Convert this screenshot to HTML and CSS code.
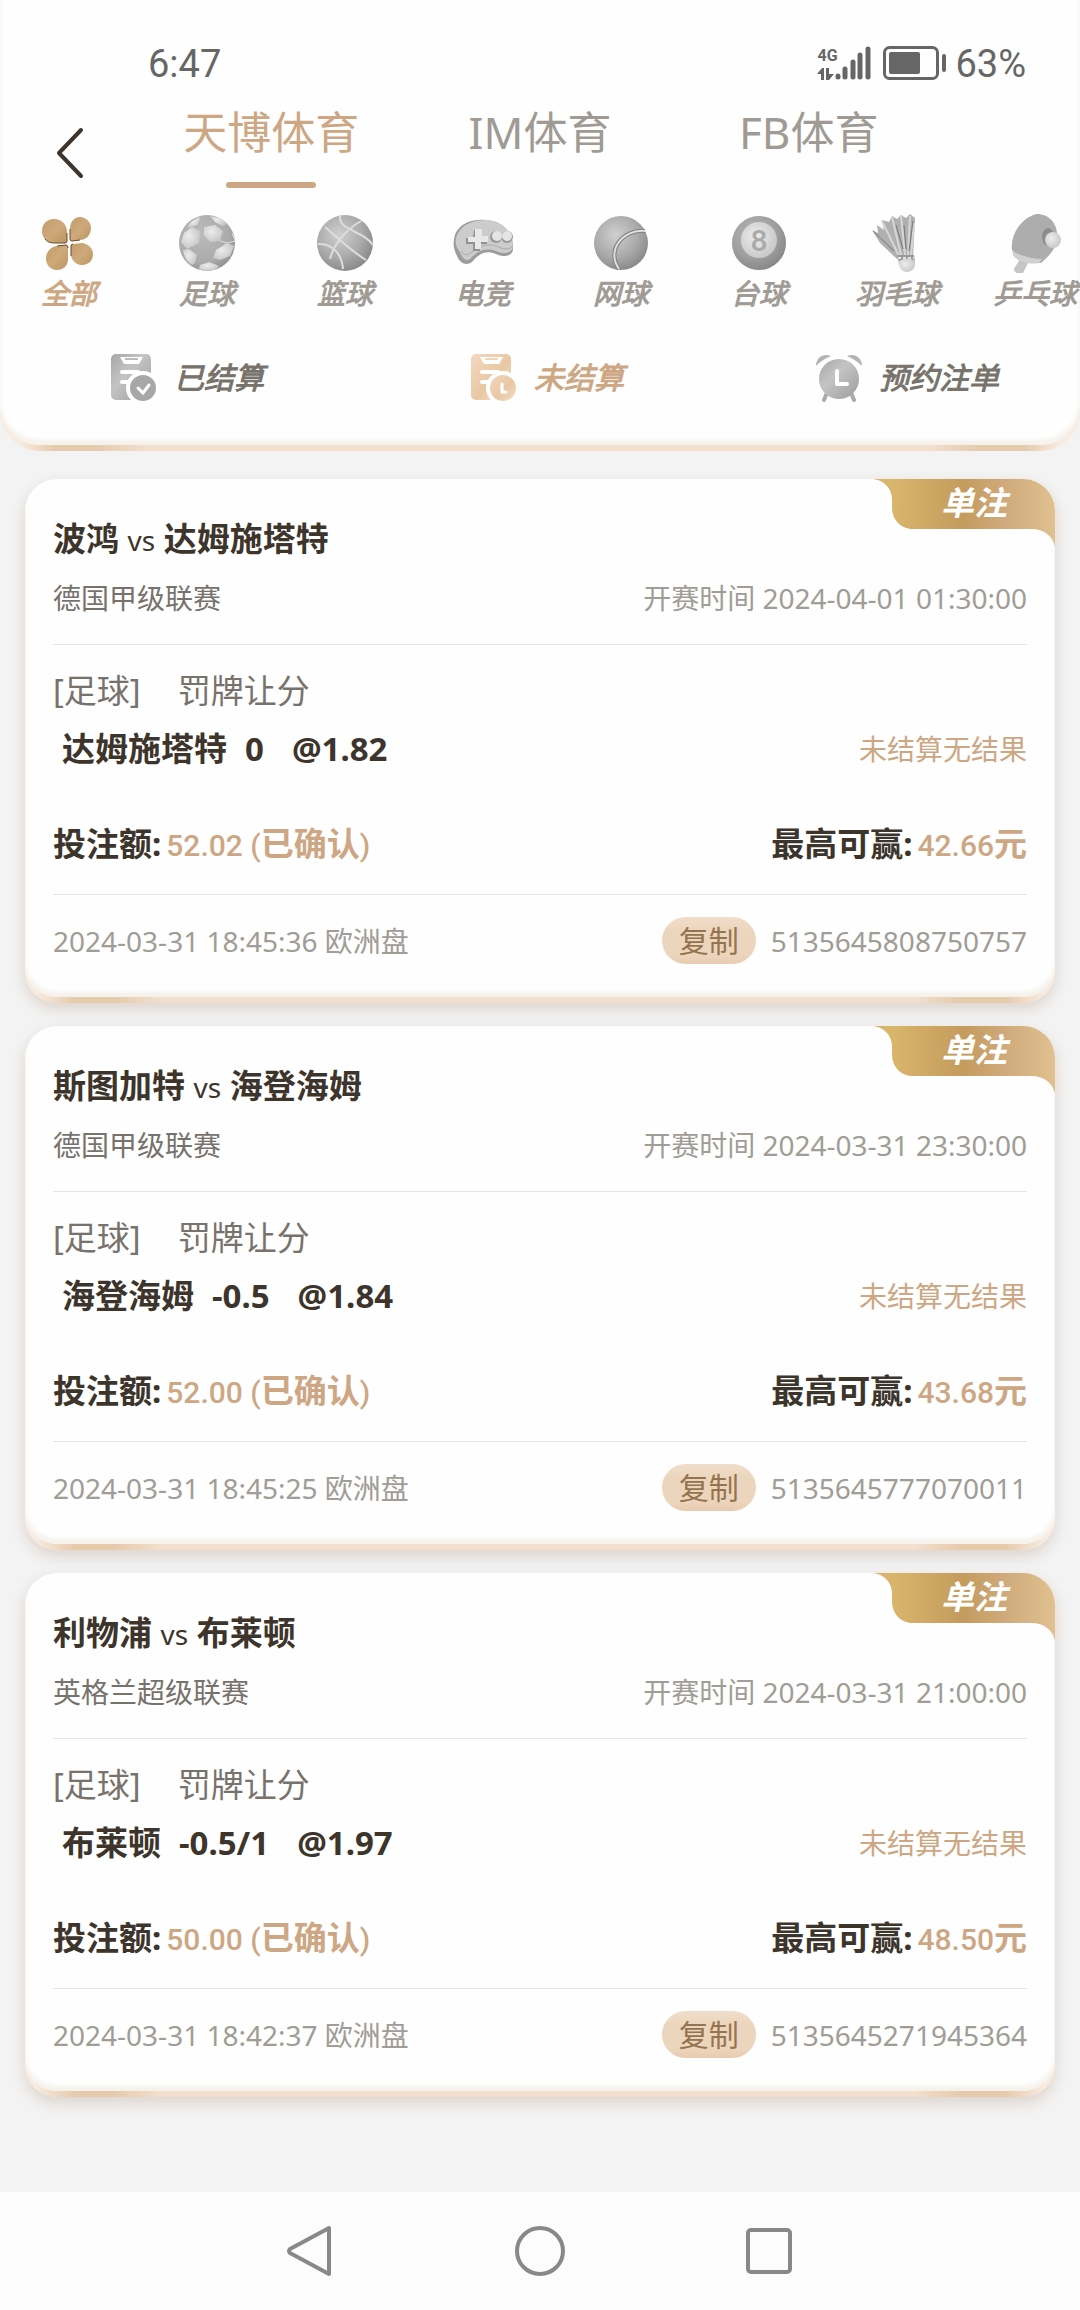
FILE: index.html
```html
<!DOCTYPE html>
<html lang="zh-CN">
<head>
<meta charset="utf-8">
<meta name="viewport" content="width=device-width, initial-scale=1">
<title>注单记录</title>
<link rel="stylesheet" href="styles.css">
</head>
<body>

  <header class="header">
    <div class="header-inner">
      <div class="status-bar">
        <span class="clock">6:47</span>
        <div class="status-right">
          <div class="network">
            <span class="network-type">4G</span>
            <svg width="18" height="12" viewBox="0 0 18 12" fill="#666"><path d="M0 6L5 0H7V12H4V6Z M9 0H12V6H17L12 12H9Z"/></svg>
          </div>
          <svg class="signal" width="36" height="34" viewBox="0 0 36 34" stroke="#666" stroke-width="5" stroke-linecap="round"><path d="M3 30V31M10 23V31M18 16V31M25 9V31M33 3V31"/></svg>
          <svg class="battery" width="64" height="34" viewBox="0 0 64 34"><rect x="1.500" y="1.500" width="53" height="31" rx="5" fill="none" stroke="#666" stroke-width="3"/><rect x="6" y="6" width="31" height="22" rx="2" fill="#666"/><rect x="59" y="8" width="4" height="18" rx="2" fill="#666"/></svg>
          <span class="percent">63%</span>
        </div>
      </div>

      <div class="top-row">
        <button class="back-button" aria-label="返回">
          <svg width="28" height="52" viewBox="0 0 28 52" fill="none" stroke="#3d352b" stroke-width="4" stroke-linecap="round" stroke-linejoin="round"><path d="M25 3L3 26L25 49"/></svg>
        </button>
        <nav class="venue-tabs">
          <button class="venue-tab active">天博体育</button>
          <button class="venue-tab">IM体育</button>
          <button class="venue-tab">FB体育</button>
        </nav>
      </div>

      <div class="sports">
        <button class="sport active">
          <svg viewBox="0 0 60 60">
            <defs>
              <linearGradient id="gold" x1="0" y1="0" x2="1" y2="1"><stop offset="0" stop-color="#c39b69"/><stop offset=".5" stop-color="#cfa97a"/><stop offset="1" stop-color="#bc9463"/></linearGradient>
              <radialGradient id="ball" cx=".4" cy=".35" r=".7"><stop offset="0" stop-color="#cfcfcf"/><stop offset=".6" stop-color="#a9a9a9"/><stop offset="1" stop-color="#858585"/></radialGradient>
              <radialGradient id="soccer" cx=".4" cy=".35" r=".7"><stop offset="0" stop-color="#bbb"/><stop offset=".7" stop-color="#ababab"/><stop offset="1" stop-color="#8f8f8f"/></radialGradient>
              <radialGradient id="shine" cx=".4" cy=".4" r=".7"><stop offset="0" stop-color="#ececec"/><stop offset="1" stop-color="#c4c4c4"/></radialGradient>
              <linearGradient id="gray" x1="0" y1="0" x2="1" y2="1"><stop offset="0" stop-color="#a6a6a6"/><stop offset=".4" stop-color="#c4c4c4"/><stop offset="1" stop-color="#9c9c9c"/></linearGradient>
              <linearGradient id="peach" x1="0" y1="0" x2="1" y2="1"><stop offset="0" stop-color="#f3d9c0"/><stop offset=".55" stop-color="#e9c7a4"/><stop offset="1" stop-color="#f6e3d0"/></linearGradient>
            </defs>
            <g fill="url(#gold)">
              <path d="M28 28Q28 30 26 30H15C7 30 3 24 3 18C3 10 9 6 15 6C24 6 28 13 28 19Z"/>
              <path d="M31 26V16C31 8 36 4 41 4C47 4 52 9 52 15C52 22 47 27 41 27L33 28Q31 28 31 26Z"/>
              <path d="M29 35V46C29 53 24 57 18 57C11 57 7 51 7 46C7 38 12 34 18 33L27 32Q29 32 29 35Z"/>
              <path d="M32 33Q32 31 34 31L43 30C50 31 54 36 54 41C54 48 49 52 43 52C37 52 32 47 32 41Z"/>
            </g>
            <g fill="none" stroke="#6b4b29" stroke-width="1"><path d="M6 26C9 30 13 30 17 30H26Q28 30 28 28V20"/><path d="M31 16V26Q31 28 33 28L41 27"/><path d="M18 33L27 32Q29 32 29 35"/><path d="M32 43V33Q32 31 34 31"/></g>
          </svg>
          <span>全部</span>
        </button>
        <button class="sport">
          <svg viewBox="0 0 60 60">
            <circle cx="30" cy="30" r="28" fill="url(#soccer)"/>
            <g fill="url(#shine)"><path d="M7 20L15 14L23 18L22 30L10 36L4 29Z"/><path d="M27 14L38 12L46 18L43 28L33 29L27 22Z"/><path d="M39 37L50 30L57 33L53 43L43 47L36 45Z"/><path d="M6 37L12 36L20 42L18 50L15 52C10 49 7 44 6 37Z"/><path d="M23 52L32 49L40 52L42 54C36 58 29 59 22 56Z"/><path d="M13 10L21 4L24 5L20 12L10 15Z"/><path d="M33 3L43 5L50 11L45 13L38 9Z"/></g>
            <path d="M43 28L50 30M55 20L58 28L50 30" stroke="#ddd" stroke-width="1" fill="none"/>
          </svg>
          <span>足球</span>
        </button>
        <button class="sport">
          <svg viewBox="0 0 60 60">
            <circle cx="30" cy="30" r="28" fill="url(#ball)"/>
            <g fill="none" stroke="#ddd" stroke-width="2"><path d="M46 8C29 18 18 33 15 46"/><path d="M10 14C22 24 36 38 51 47"/><path d="M25 2C24 13 32 14 40 19C49 23 54 26 58 32"/><path d="M3 31C18 30 27 42 28 56"/></g>
          </svg>
          <span>篮球</span>
        </button>
        <button class="sport">
          <svg viewBox="0 0 60 60">
            <path d="M1 27C3 10 20 6 33 7C50 8 61 20 60 36C60 43 51 45 43 41C31 36 24 43 19 49C14 53 7 51 4 43C1 37 0 32 1 27Z" fill="#9c9c9c"/>
            <path d="M3 26C6 11 21 7 33 7C49 8 60 19 60 33C60 40 51 42 43 38C30 33 22 41 17 46C11 50 8 41 6 38C3 33 2 30 3 26Z" fill="#ccc"/>
            <path d="M8 38C11 43 15 43 20 38C32 29 41 32 48 35C54 37 58 36 60 32" fill="none" stroke="#aaa" stroke-width="1"/>
            <path d="M21 17H28V24H34V31H27V38H20V31H13V25H20Z" fill="#929292"/><path d="M22 16H29V23H35V29H28V36H22V29H15V24H22Z" fill="#e8e8e8"/>
            <circle cx="43" cy="24" r="6" fill="#999"/><circle cx="54" cy="24" r="6" fill="#999"/><circle cx="44" cy="23" r="5" fill="#e5e5e5"/><circle cx="54" cy="23" r="5" fill="#e5e5e5"/>
          </svg>
          <span>电竞</span>
        </button>
        <button class="sport">
          <svg viewBox="0 0 60 60">
            <circle cx="30" cy="30" r="27" fill="url(#ball)"/>
            <path d="M54 18C31 16 15 38 28 56" fill="none" stroke="#7f7f7f" stroke-width="4"/>
            <path d="M54 18C31 16 15 38 28 56" fill="none" stroke="#e0e0e0" stroke-width="2"/>
          </svg>
          <span>网球</span>
        </button>
        <button class="sport">
          <svg viewBox="0 0 60 60">
            <circle cx="30" cy="30" r="27" fill="url(#ball)"/><circle cx="30" cy="30" r="27" fill="#888" opacity=".3"/>
            <circle cx="30" cy="27" r="18" fill="url(#shine)"/>
            <text class="eight" x="30" y="38" text-anchor="middle">8</text>
          </svg>
          <span>台球</span>
        </button>
        <button class="sport">
          <svg viewBox="0 0 60 60">
            <path d="M5 17L11 20L10 12L17 17L15 7L22 9L25 3L30 6L34 2L39 5L43 1L48 5L46 46H30L13 30Z" fill="#b0b0b0"/>
            <path d="M15 8L32 43M25 4L34 42M34 3L38 42M43 3L41 42M47 10L44 43" fill="none" stroke="#d6d6d6" stroke-width="2"/>
            <path d="M29 12L36 36M37 12L39 36M46 8L42 38M6 18L27 38" fill="none" stroke="#777" stroke-width="1"/>
            <path d="M30 42L47 42L48 50L32 50Z" fill="#999"/><path d="M31 45H47" stroke="#e5e5e5" stroke-width="2" stroke-dasharray="3 2"/>
            <path d="M31 49C36 45 44 45 48 48C49 55 45 59 40 59C35 59 32 54 31 49Z" fill="url(#shine)"/>
          </svg>
          <span>羽毛球</span>
        </button>
        <button class="sport">
          <svg viewBox="0 0 60 60">
            <path d="M15 46L23 50L18 60C14 62 9 60 9 56Z" fill="#c5c5c5"/>
            <path d="M7 37C5 21 17 4 32 1C45 1 53 12 52 24C51 36 45 42 36 50C27 50 14 46 7 37Z" fill="#adadad"/>
            <path d="M7 38C16 43 28 46 37 46L34 50C25 52 12 49 8 42Z" fill="#d0d0d0"/>
            <ellipse cx="43" cy="24" rx="6" ry="9" fill="#777" opacity=".6"/><circle cx="48" cy="27" r="8" fill="url(#shine)"/>
          </svg>
          <span>乒乓球</span>
        </button>
      </div>

      <div class="bet-tabs">
        <button class="bet-tab">
          <svg width="46" height="48" viewBox="0 0 46 48">
            <rect width="40" height="46" rx="5" fill="url(#gray)"/>
            <path d="M9 3H32L28 10H13Z" fill="#fff"/><path d="M14 5H27" stroke="#bbb" stroke-width="2"/>
            <path d="M11 18H27M11 28H19" stroke="#fff" stroke-width="4" stroke-linecap="round"/>
            <circle cx="32" cy="34" r="15" fill="#a7a7a7" stroke="#fff" stroke-width="4"/>
            <path d="M27 34L32 39L38 31" fill="none" stroke="#fff" stroke-width="3" stroke-linecap="round"/>
          </svg>
          <span>已结算</span>
        </button>
        <button class="bet-tab active">
          <svg width="46" height="48" viewBox="0 0 46 48">
            <rect width="40" height="46" rx="5" fill="url(#peach)"/>
            <path d="M9 3H32L28 10H13Z" fill="#fff"/><path d="M14 5H27" stroke="#f0d5b9" stroke-width="2"/>
            <path d="M11 18H27M11 28H19" stroke="#fff" stroke-width="4" stroke-linecap="round"/>
            <circle cx="32" cy="34" r="15" fill="url(#peach)" stroke="#fff" stroke-width="4"/>
            <path d="M31 30V38H35" fill="none" stroke="#fff" stroke-width="3" stroke-linecap="round"/>
          </svg>
          <span>未结算</span>
        </button>
        <button class="bet-tab">
          <svg width="46" height="48" viewBox="0 0 46 48">
            <path d="M0 12C0 4 7-1 15 2C8 5 4 8 0 12ZM46 12C46 4 39-1 31 2C38 5 42 8 46 12Z" fill="#b3b3b3"/>
            <path d="M10 41L8 46M36 41L38 46" stroke="#aaa" stroke-width="4" stroke-linecap="round"/>
            <circle cx="23" cy="25" r="20" fill="url(#gray)"/>
            <path d="M21 17V30H31" fill="none" stroke="#fff" stroke-width="4" stroke-linecap="round" stroke-linejoin="round"/>
          </svg>
          <span>预约注单</span>
        </button>
      </div>
    </div>
  </header>

  <main class="bet-list">
    <article class="card">
      <div class="card-inner">
        <div class="badge">单注</div>
        <h2 class="match">波鸿 <span class="vs">vs</span> 达姆施塔特</h2>
        <div class="row league-row">
          <span class="league">德国甲级联赛</span>
          <span class="muted">开赛时间 2024-04-01 01:30:00</span>
        </div>
        <div class="market"><span>[足球]</span><span>罚牌让分</span></div>
        <div class="row">
          <div class="pick"><span>达姆施塔特</span><span class="handicap">0</span><span>@1.82</span></div>
          <span class="result">未结算无结果</span>
        </div>
        <div class="row money-row">
          <div class="money">投注额:<span class="amount">52.02 (<b>已确认</b>)</span></div>
          <div class="money">最高可赢:<span class="amount">42.66<b>元</b></span></div>
        </div>
        <div class="row order-row">
          <span class="muted">2024-03-31 18:45:36 欧洲盘</span>
          <div class="order"><button class="copy-button">复制</button><span class="muted">5135645808750757</span></div>
        </div>
      </div>
    </article>

    <article class="card">
      <div class="card-inner">
        <div class="badge">单注</div>
        <h2 class="match">斯图加特 <span class="vs">vs</span> 海登海姆</h2>
        <div class="row league-row">
          <span class="league">德国甲级联赛</span>
          <span class="muted">开赛时间 2024-03-31 23:30:00</span>
        </div>
        <div class="market"><span>[足球]</span><span>罚牌让分</span></div>
        <div class="row">
          <div class="pick"><span>海登海姆</span><span class="handicap">-0.5</span><span>@1.84</span></div>
          <span class="result">未结算无结果</span>
        </div>
        <div class="row money-row">
          <div class="money">投注额:<span class="amount">52.00 (<b>已确认</b>)</span></div>
          <div class="money">最高可赢:<span class="amount">43.68<b>元</b></span></div>
        </div>
        <div class="row order-row">
          <span class="muted">2024-03-31 18:45:25 欧洲盘</span>
          <div class="order"><button class="copy-button">复制</button><span class="muted">5135645777070011</span></div>
        </div>
      </div>
    </article>

    <article class="card">
      <div class="card-inner">
        <div class="badge">单注</div>
        <h2 class="match">利物浦 <span class="vs">vs</span> 布莱顿</h2>
        <div class="row league-row">
          <span class="league">英格兰超级联赛</span>
          <span class="muted">开赛时间 2024-03-31 21:00:00</span>
        </div>
        <div class="market"><span>[足球]</span><span>罚牌让分</span></div>
        <div class="row">
          <div class="pick"><span>布莱顿</span><span class="handicap">-0.5/1</span><span>@1.97</span></div>
          <span class="result">未结算无结果</span>
        </div>
        <div class="row money-row">
          <div class="money">投注额:<span class="amount">50.00 (<b>已确认</b>)</span></div>
          <div class="money">最高可赢:<span class="amount">48.50<b>元</b></span></div>
        </div>
        <div class="row order-row">
          <span class="muted">2024-03-31 18:42:37 欧洲盘</span>
          <div class="order"><button class="copy-button">复制</button><span class="muted">5135645271945364</span></div>
        </div>
      </div>
    </article>
  </main>

  <footer class="system-nav">
    <button aria-label="后退"><svg width="50" height="54" viewBox="0 0 50 54"><path d="M43 4V50L4 29Q2 27 4 25Z"/></svg></button>
    <button aria-label="主页"><svg width="54" height="54" viewBox="0 0 54 54"><circle cx="27" cy="27" r="23"/></svg></button>
    <button aria-label="最近任务"><svg width="54" height="54" viewBox="0 0 54 54"><rect x="6" y="6" width="42" height="42" rx="3"/></svg></button>
  </footer>

</body>
</html>
```
FILE: styles.css
```css
* {
  box-sizing: border-box;
}
body {
  margin: 0;
  min-height: 100vh;
  display: flex;
  flex-direction: column;
  background-color: #f3f3f3;
  color: #3d352b;
  font-family: "Noto Sans", "Noto Sans CJK SC", sans-serif;
  font-size: 28px;
  line-height: 40px;
  overflow-x: hidden;
}
button {
  padding: 0;
  border: none;
  background: none;
  color: inherit;
  font: inherit;
  cursor: pointer;
}
svg {
  display: block;
}

/* header */
.header {
  padding-bottom: 6px;
  border-radius: 0 0 40px 40px;
  background: linear-gradient(to right, #f8ebe0 20px, #e6caac 55px, #e6caac 95px, #f2dfce 145px, #f2dfce calc(100% - 150px), #e6caac calc(100% - 100px), #e6caac calc(100% - 55px), #f8ebe0 calc(100% - 20px));
}
.header-inner {
  padding-bottom: 36px;
  border-radius: 0 0 40px 40px;
  background-color: #fefefe;
  box-shadow: inset 0 -5px 4px #f5f1eb;
  overflow: hidden;
}
.status-bar {
  display: flex;
  justify-content: space-between;
  align-items: center;
  height: 88px;
  padding: 38px 54px 0 148px;
  color: #666;
  font-family: Roboto, "Noto Sans", sans-serif;
}
.clock,
.percent {
  padding-top: 2px;
  font-size: 38px;
}
.status-right {
  display: flex;
  align-items: center;
}
.network {
  width: 18px;
}
.network-type {
  display: block;
  margin-bottom: 3px;
  font-size: 16px;
  font-weight: bold;
  line-height: 18px;
}
.battery {
  margin: 0 8px 0 12px;
}
.top-row {
  display: grid;
  grid-template-columns: 137px 1fr 137px;
  height: 112px;
}
.back-button {
  display: flex;
  align-items: center;
  padding: 18px 0 0 56px;
}
.venue-tabs {
  display: flex;
}
.venue-tab {
  flex: 1;
  display: flex;
  flex-direction: column;
  align-items: center;
  padding-top: 14px;
  color: #9f9b94;
  font-size: 44px;
  line-height: 60px;
}
.venue-tab.active {
  color: #cda783;
}
.venue-tab.active::after {
  content: "";
  width: 90px;
  height: 6px;
  margin-top: 20px;
  border-radius: 3px;
  background-color: #cda783;
}
.sports {
  display: flex;
  height: 122px;
  padding-top: 13px;
}
.sport {
  flex: 0 0 138px;
  display: flex;
  flex-direction: column;
  align-items: center;
  color: #9f9b94;
  font-style: italic;
  white-space: nowrap;
}
.sport span,
.bet-tab span {
  -webkit-text-stroke: 1px currentColor;
}
.sport svg {
  width: 60px;
  height: 60px;
}
.sport.active {
  color: #cda783;
}
.eight {
  fill: #aaa;
  font: 500 30px Roboto, sans-serif;
}
.bet-tabs {
  display: flex;
  height: 87px;
  padding-top: 24px;
}
.bet-tab {
  flex: 1;
  display: flex;
  justify-content: center;
  align-items: center;
  gap: 17px;
  height: 64px;
  padding-left: 15px;
  color: #77726a;
  font-size: 30px;
  font-style: italic;
}
.bet-tab.active {
  color: #cda783;
}

/* bets */
.bet-list {
  flex: 1;
  display: flex;
  flex-direction: column;
  gap: 23px;
  padding: 28px 25px;
}
.card {
  padding-bottom: 6px;
  border-radius: 32px;
  background: linear-gradient(to right, #f8ebe0 10px, #e6caac 50px, #e6caac 90px, #f2dfce 135px, #f2dfce calc(100% - 140px), #e6caac calc(100% - 95px), #e6caac calc(100% - 50px), #f8ebe0 calc(100% - 10px));
  box-shadow: 0 6px 14px rgba(140, 100, 70, 0.22);
}
.card-inner {
  position: relative;
  padding: 36px 28px 33px;
  border-radius: 32px;
  background-color: #fefefe;
  box-shadow: inset 0 -5px 4px #f5f1eb;
}
.badge {
  position: absolute;
  top: 0;
  right: 0;
  width: 184px;
  height: 68px;
  padding-left: 22px;
  background: linear-gradient(to right, #d9b56c 12%, #c49b5d 50%, #cfa97b 72%, #e0c18f);
  clip-path: path("M0 0H152A32 32 0 0 1 184 32V68C182 57 173 50 160 50H42C29 50 21 40 21 28V20C21 9 12 0 0 0Z");
  color: #fff;
  font-size: 33px;
  font-style: italic;
  font-weight: bold;
  line-height: 48px;
  text-align: center;
}
.match {
  margin: 0;
  font-size: 33px;
  line-height: 48px;
}
.vs {
  font-size: 28px;
  font-weight: normal;
}
.row {
  display: flex;
  justify-content: space-between;
  align-items: center;
}
.league-row {
  margin-top: 14px;
  padding-bottom: 26px;
  border-bottom: 1px solid #e6e6e6;
}
.league {
  color: #77726c;
}
.muted {
  color: #a09c96;
}
.market {
  display: flex;
  gap: 37px;
  margin: 22px 0 10px;
  color: #77726c;
  font-size: 33px;
  line-height: 48px;
}
.pick {
  display: flex;
  padding-left: 9px;
  font-size: 33px;
  font-weight: bold;
  line-height: 48px;
}
.handicap {
  margin: 0 28px 0 18px;
}
.result {
  color: #cda783;
}
.money-row {
  height: 122px;
  padding-top: 47px;
  border-bottom: 1px solid #e6e6e6;
  align-items: flex-start;
}
.money {
  font-size: 33px;
  font-weight: bold;
  line-height: 48px;
}
.amount {
  margin-left: 5px;
  color: #cda783;
  font-family: Roboto, "Noto Sans CJK SC", sans-serif;
  font-size: 30px;
  font-weight: 500;
}
.amount b {
  font-size: 33px;
}
.order-row {
  margin-top: 22px;
}
.order {
  display: flex;
  align-items: center;
  gap: 15px;
}
.copy-button {
  height: 47px;
  padding: 0 17px;
  border-radius: 24px;
  background: linear-gradient(to bottom, #f0decb, #ecd5bd 30%, #ecd5bd 80%, #e9cbb0);
  color: #94744f;
  font-size: 30px;
}

/* phone navigation */
.system-nav {
  display: flex;
  justify-content: center;
  height: 118px;
  background-color: #fcfcfc;
}
.system-nav button {
  width: 229px;
  display: flex;
  justify-content: center;
  align-items: center;
}
.system-nav svg {
  fill: none;
  stroke: #888;
  stroke-width: 4;
  stroke-linejoin: round;
}
```
